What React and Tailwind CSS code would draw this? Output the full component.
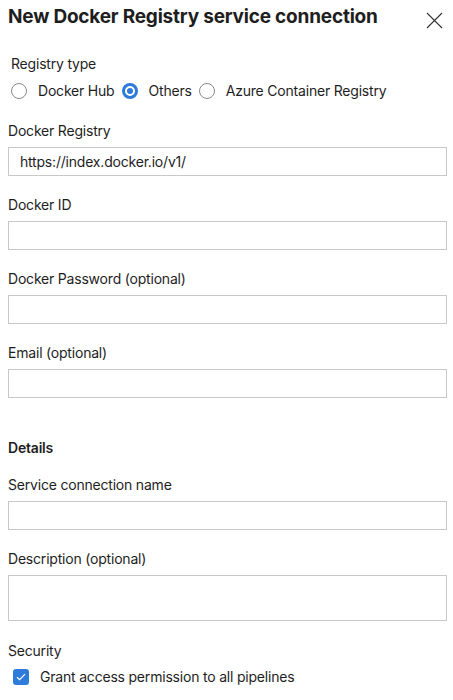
import React, { useState } from 'react';

const Field = ({ label, value = '', tall = false }) => (
  <div className="flex flex-col">
    <label className="text-[14px] leading-5 tracking-[-0.2px] text-[#1e1e1e]">{label}</label>
    {tall ? (
      <textarea
        readOnly
        defaultValue={value}
        className="mt-[6px] h-[46px] w-full resize-none border border-[#c8c8c8] bg-white px-3 text-[14px] outline-none"
      />
    ) : (
      <input
        readOnly
        defaultValue={value}
        className="mt-[6px] h-[29px] w-full border border-[#c8c8c8] bg-white px-[11px] text-[14px] tracking-[-0.2px] text-[#1e1e1e] outline-none"
      />
    )}
  </div>
);

const Radio = ({ label, checked, onClick }) => (
  <button type="button" onClick={onClick} className="flex items-center gap-[11px]">
    {checked ? (
      <span className="flex h-4 w-4 items-center justify-center rounded-full bg-[#2f7bd9]">
        <span className="h-[10px] w-[10px] rounded-full border-2 border-white bg-[#2f7bd9]" />
      </span>
    ) : (
      <span className="h-4 w-4 rounded-full border border-[#8a8a8a] bg-white" />
    )}
    <span className="text-[14px] leading-5 tracking-[-0.2px] text-[#1e1e1e]">{label}</span>
  </button>
);

const App = () => {
  const [registry, setRegistry] = useState('others');

  return (
    <div
      className="h-[700px] w-[453px] overflow-hidden bg-white text-[#1e1e1e]"
      style={{ fontFamily: 'Inter, "Liberation Sans", sans-serif' }}
    >
      {/* Header */}
      <div className="flex items-start justify-between pl-2 pr-[10px] pt-[5px]">
        <h1 className="text-[19px] font-bold leading-6 tracking-[-0.2px]">
          New Docker Registry service connection
        </h1>
        <button type="button" className="mt-[7px] text-[#333]">
          <svg width="17" height="17" viewBox="0 0 17 17" fill="none" stroke="currentColor" strokeWidth="1.1">
            <path d="M1 1L16 16M16 1L1 16" />
          </svg>
        </button>
      </div>

      {/* Registry type */}
      <div className="mt-[25px] flex flex-col pl-[11px]">
        <span className="text-[14px] leading-5 tracking-[-0.2px]">Registry type</span>
        <div className="mt-[7px] flex items-center gap-[7px]">
          <Radio label="Docker Hub" checked={registry === 'hub'} onClick={() => setRegistry('hub')} />
          <Radio label="Others" checked={registry === 'others'} onClick={() => setRegistry('others')} />
          <Radio label="Azure Container Registry" checked={registry === 'acr'} onClick={() => setRegistry('acr')} />
        </div>
      </div>

      {/* Form */}
      <div className="mt-[20px] flex flex-col gap-[19px] pl-2 pr-[6px]">
        <Field label="Docker Registry" value="https://index.docker.io/v1/" />
        <Field label="Docker ID" />
        <Field label="Docker Password (optional)" />
        <Field label="Email (optional)" />
      </div>

      {/* Details */}
      <div className="mt-[40px] flex flex-col pl-2 pr-[6px]">
        <h2 className="text-[14px] font-semibold leading-5 tracking-[-0.2px]">Details</h2>
        <div className="mt-[17px] flex flex-col gap-[19px]">
          <Field label="Service connection name" />
          <Field label="Description (optional)" tall />
        </div>
      </div>

      {/* Security */}
      <div className="mt-[20px] flex flex-col pl-2">
        <span className="text-[14px] leading-5 tracking-[-0.2px]">Security</span>
        <label className="mt-[6px] flex items-center gap-[11px] pl-[5px]">
          <span className="flex h-4 w-4 items-center justify-center rounded-[3px] bg-[#2f7bd9]">
            <svg width="10" height="8" viewBox="0 0 10 8" fill="none" stroke="white" strokeWidth="1.2">
              <path d="M1 4.2L3.6 6.7L9 1.2" />
            </svg>
          </span>
          <span className="text-[14px] leading-5 tracking-[-0.2px]">Grant access permission to all pipelines</span>
        </label>
      </div>
    </div>
  );
};

export default App;
